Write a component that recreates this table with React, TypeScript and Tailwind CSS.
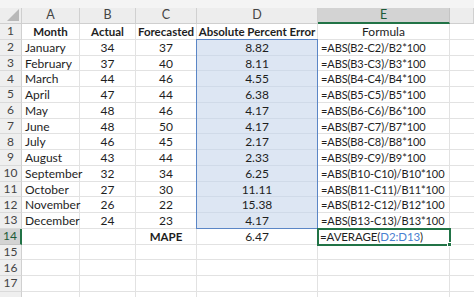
import React from "react";

const rows: [string, string, string, string, string, string][] = [
  ["1", "Month", "Actual", "Forecasted", "Absolute Percent Error", "Formula"],
  ["2", "January", "34", "37", "8.82", "=ABS(B2-C2)/B2*100"],
  ["3", "February", "37", "40", "8.11", "=ABS(B3-C3)/B3*100"],
  ["4", "March", "44", "46", "4.55", "=ABS(B4-C4)/B4*100"],
  ["5", "April", "47", "44", "6.38", "=ABS(B5-C5)/B5*100"],
  ["6", "May", "48", "46", "4.17", "=ABS(B6-C6)/B6*100"],
  ["7", "June", "48", "50", "4.17", "=ABS(B7-C7)/B7*100"],
  ["8", "July", "46", "45", "2.17", "=ABS(B8-C8)/B8*100"],
  ["9", "August", "43", "44", "2.33", "=ABS(B9-C9)/B9*100"],
  ["10", "September", "32", "34", "6.25", "=ABS(B10-C10)/B10*100"],
  ["11", "October", "27", "30", "11.11", "=ABS(B11-C11)/B11*100"],
  ["12", "November", "26", "22", "15.38", "=ABS(B12-C12)/B12*100"],
  ["13", "December", "24", "23", "4.17", "=ABS(B13-C13)/B13*100"],
];

const cellBase =
  "h-[15.75px] border-r border-b border-[#e2e2e2] whitespace-nowrap overflow-visible leading-[15px] text-[#1e1e1e]";

function RowHeader({ n, active }: { n: string; active?: boolean }) {
  return (
    <div
      className={
        "h-[15.75px] flex items-center justify-center leading-none text-[12px] border-b " +
        (active
          ? "bg-[#d3d3d3] text-[#1d5b38] border-r-2 border-r-[#217346] border-b-[#c4c4c4]"
          : "bg-[#efefef] text-[#444] border-r border-r-[#d0d0d0] border-b-[#dadada]")
      }
    >
      {n}
    </div>
  );
}

export default function App() {
  const colHeaders = ["A", "B", "C", "D", "E", ""];
  return (
    <div
      className="w-[474px] h-[297px] overflow-hidden bg-white relative"
      style={{ fontFamily: "Lato, 'Open Sans', sans-serif" }}
    >
      <div className="h-[8px] bg-[#f4f4f4]" />
      <div className="grid grid-cols-[22px_58px_56px_61px_121px_132px_24px] text-[12px]">
        {/* column headers */}
        <div className="h-[16px] bg-[#ededed] border-r border-b border-[#cfcfcf] relative">
          <svg className="absolute right-[2px] bottom-[2px]" width="12" height="12" viewBox="0 0 12 12">
            <polygon points="12,0 12,12 0,12" fill="#b8b8b8" />
          </svg>
        </div>
        {colHeaders.map((c, i) => (
          <div
            key={i}
            className={
              "h-[16px] flex items-center justify-center leading-none text-[12.5px] border-r " +
              (c === "E"
                ? "bg-[#d3d3d3] text-[#1d5b38] border-r-[#c4c4c4] border-b-2 border-b-[#217346]"
                : "bg-[#ededed] text-[#444] border-[#d0d0d0] border-b border-b-[#cfcfcf]")
            }
          >
            {c}
          </div>
        ))}

        {rows.map((r, ri) => {
          const header = ri === 0;
          const bold = header ? " font-bold text-[11.5px]" : "";
          const sel = ri > 0;
          return (
            <React.Fragment key={ri}>
              <RowHeader n={r[0]} />
              <div className={cellBase + bold + (header ? " text-center" : " pl-[3px]")}>{r[1]}</div>
              <div className={cellBase + bold + " text-center"}>{r[2]}</div>
              <div className={cellBase + bold + " text-center"}>{r[3]}</div>
              <div
                className={
                  cellBase +
                  bold +
                  " text-center" +
                  (sel ? " bg-[#dde6f3] border-b-[#d0dae8] border-r-[#d0dae8]" : "")
                }
              >
                {r[4]}
              </div>
              <div
                className={
                  cellBase + (header ? " text-center" : " pl-[3px] text-[11px] tracking-[-0.1px]")
                }
              >
                {r[5]}
              </div>
              <div className={cellBase + " border-r-0"} />
            </React.Fragment>
          );
        })}

        {/* row 14 */}
        <RowHeader n="14" active />
        <div className={cellBase} />
        <div className={cellBase} />
        <div className={cellBase + " text-center font-bold text-[11.5px]"}>MAPE</div>
        <div className={cellBase + " text-center"}>6.47</div>
        <div className={cellBase + " pl-[2px] text-[11.5px] tracking-[-0.1px]"}>
          =AVERAGE(<span className="text-[#4a7fd0]">D2:D13</span>)
        </div>
        <div className={cellBase + " border-r-0"} />

        {["15", "16", "17", ""].map((n, i) => (
          <React.Fragment key={i}>
            <RowHeader n={n} />
            <div className={cellBase} />
            <div className={cellBase} />
            <div className={cellBase} />
            <div className={cellBase} />
            <div className={cellBase} />
            <div className={cellBase + " border-r-0"} />
          </React.Fragment>
        ))}
      </div>

      {/* selection range D2:D13 */}
      <div className="absolute left-[196px] top-[39px] w-[122px] h-[190px] border border-[#5b86c6] pointer-events-none" />
      {/* active cell E14 */}
      <div className="absolute left-[317px] top-[228px] w-[134px] h-[17.5px] border-2 border-[#217346] pointer-events-none" />
      <div className="absolute left-[447px] top-[242px] w-[5px] h-[5px] bg-[#217346] border border-white pointer-events-none" />
    </div>
  );
}
